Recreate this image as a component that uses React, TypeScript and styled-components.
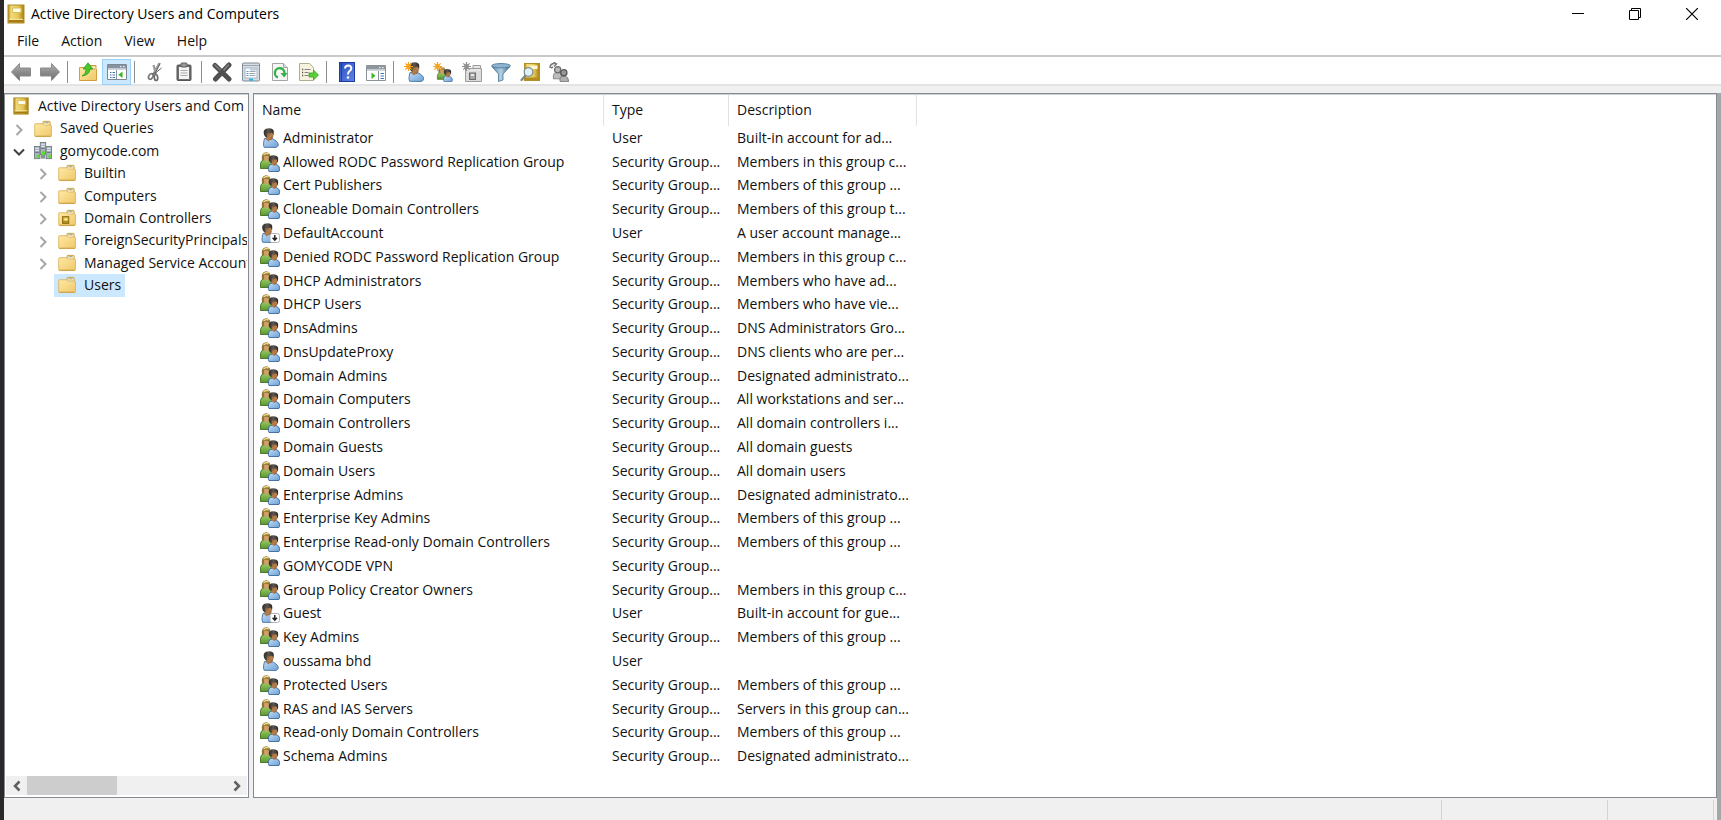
import React from 'react';
import styled, { createGlobalStyle } from 'styled-components';

const GlobalStyle = createGlobalStyle`
  *, *::before, *::after { box-sizing: border-box; }
  body {
    margin: 0;
    background: #fff;
    color: #111;
    font-family: "Open Sans", "Noto Sans", sans-serif;
    font-size: 14px;
    line-height: 20px;
  }
  button {
    font: inherit;
    color: inherit;
    background: none;
    border: 0;
    padding: 0;
    margin: 0;
  }
`;

/* ---------- Icons ---------- */

type IconProps = { size?: number };

const Svg = ({ size = 20, children }: React.PropsWithChildren<IconProps>) => (
  <svg width={size} height={size} viewBox="0 0 20 20" fill="none" aria-hidden="true">
    {children}
  </svg>
);

const GradientDefs = styled.svg`
  display: block;
`;

const Gradients = () => (
  <GradientDefs width="0" height="0" aria-hidden="true">
    <defs>
      <linearGradient id="gold" x1="0" y1="0" x2="1" y2="0">
        <stop offset="0" stopColor="#b58a12" />
        <stop offset=".2" stopColor="#f0dc7c" />
        <stop offset=".65" stopColor="#e3c552" />
        <stop offset="1" stopColor="#a87c12" />
      </linearGradient>
      <linearGradient id="folder" x1="0" y1="0" x2="1" y2="1">
        <stop offset="0" stopColor="#ffe9a6" />
        <stop offset="1" stopColor="#efc868" />
      </linearGradient>
      <linearGradient id="blueBody" x1="0" y1="0" x2="1" y2="1">
        <stop offset="0" stopColor="#c2dcf6" />
        <stop offset="1" stopColor="#6ba0d6" />
      </linearGradient>
      <linearGradient id="greenBody" x1="0" y1="0" x2="0" y2="1">
        <stop offset="0" stopColor="#9acb66" />
        <stop offset="1" stopColor="#5a9630" />
      </linearGradient>
      <linearGradient id="grayArrow" x1="0" y1="0" x2="0" y2="1">
        <stop offset="0" stopColor="#b4b4b4" />
        <stop offset=".5" stopColor="#8c8c8c" />
        <stop offset="1" stopColor="#6e6e6e" />
      </linearGradient>
      <linearGradient id="skin" x1="0" y1="0" x2="1" y2="1">
        <stop offset="0" stopColor="#7d5029" />
        <stop offset=".6" stopColor="#b5814f" />
        <stop offset="1" stopColor="#80512c" />
      </linearGradient>
      <linearGradient id="hair" x1="0" y1="0" x2="1" y2="0">
        <stop offset="0" stopColor="#302c29" />
        <stop offset=".5" stopColor="#5b5651" />
        <stop offset="1" stopColor="#2b2724" />
      </linearGradient>
      <linearGradient id="help" x1="0" y1="0" x2="1" y2="1">
        <stop offset="0" stopColor="#2a4fc0" />
        <stop offset="1" stopColor="#5f86e6" />
      </linearGradient>
      <linearGradient id="funnel" x1="0" y1="0" x2="1" y2="0">
        <stop offset="0" stopColor="#5b87ab" />
        <stop offset=".5" stopColor="#b4d2e6" />
        <stop offset="1" stopColor="#3d678c" />
      </linearGradient>
    </defs>
  </GradientDefs>
);

const BookIcon = ({ size }: IconProps) => (
  <Svg size={size}>
    <rect x="2" y="1" width="16" height="18" fill="url(#gold)" stroke="#b08b28" />
    <path d="M3 16h14v2.500H3z" fill="#a67c12" />
    <path d="M3 15.300h14" stroke="#f8ecae" />
    <rect x="6.500" y="4" width="8.500" height="4.500" fill="#fffce8" stroke="#d9bd55" />
  </Svg>
);

const FolderShape = () => (
  <>
    <path d="M10 4.500V2.500q0-1 1-1h6q1 0 1 1v3" fill="#f8e2a0" stroke="#c79a3c" />
    <path d="M12 3h4" stroke="#6fa9d8" />
    <path d="M.8 5q0-.8 .8-.8H10l1.500 1.500h7q.9 0 .9.800V17.500q0 .9-.9.900H1.700q-.9 0-.9-.9z" fill="url(#folder)" stroke="#dcb45c" />
    <path d="M1.500 18h17" stroke="#c8993a" />
  </>
);

const FolderIcon = ({ size }: IconProps) => (
  <Svg size={size}><FolderShape /></Svg>
);

const OuFolderIcon = ({ size }: IconProps) => (
  <Svg size={size}>
    <FolderShape />
    <rect x="5" y="8.500" width="7" height="7.500" fill="#d2ac2e" stroke="#86690c" />
    <path d="M7 10.500h3.500v2H7z" fill="#fff6c2" />
    <path d="M5 14.500h7" stroke="#86690c" />
  </Svg>
);

const Tower = ({ x, y }: { x: number; y: number }) => (
  <g>
    <rect x={x} y={y} width="6" height="13.500" fill="#a9b4bd" stroke="#727d86" />
    <path d={`M${x + 1} ${y + 2}h4M${x + 1} ${y + 4.5}h4`} stroke="#edf2f5" />
    <path d={`M${x + 1} ${y + 6.5}h4`} stroke="#5d6870" />
    <rect x={x + 2.5} y={y + 9.5} width="3" height="3" fill="#5bdc28" />
  </g>
);

const DomainIcon = ({ size }: IconProps) => (
  <Svg size={size}>
    <Tower x={7} y={0.5} />
    <Tower x={0.5} y={5} />
    <Tower x={13.5} y={5} />
    <rect x="7.500" y="14" width="5" height="4.500" fill="#87939c" />
    <rect x="9" y="11.500" width="3" height="3" fill="#5bdc28" />
  </Svg>
);

const Person = () => (
  <>
    <path d="M4.200 19.300Q3.200 17.500 3.600 14.500L4.500 10.500 10.500 10q3 1 5.500 3 2.500 2 2.400 4.500L16 19.500z" fill="url(#blueBody)" stroke="#41719f" strokeWidth=".9" />
    <path d="M5.500 11l3 2.500 2.500-3.500z" fill="#a9754a" />
    <path d="M5.500 4h7.300l.4 4.500q-.6 3.500-3.400 3.700-3.300-.2-4.300-4z" fill="url(#skin)" />
    <path d="M3.800 5.500Q3 .8 7.800.4q6-.5 6 3.600l-.3 4q-.8-3-1.600-3.400Q9 5.600 6.800 5l.2 4.500Q4.300 9 3.800 5.500z" fill="url(#hair)" />
  </>
);

const GroupPeople = () => (
  <>
    <path d="M.5 16.500V11.500Q1 8.500 3.500 7.800h5q3 1 3 4v4.700z" fill="url(#greenBody)" stroke="#41701f" strokeWidth=".9" />
    <path d="M3.500 3h5.800l.3 4q-.8 2.500-3 2.500T3 6.500z" fill="#cfa06a" />
    <path d="M2 8Q.8 .8 6 .3q5.200-.1 4.300 7L9 8.500 8.800 4.500Q5.500 2.800 4 4.500L4.200 8.300z" fill="#8f7637" />
    <path d="M3.500 3q2-2 5.200-1.200" stroke="#f0da88" strokeWidth="1.400" />
    <path d="M9 19.500Q8 18 8.500 15q.6-2 2.500-2.800h4.500q3.800 1.300 4.200 4 .2 2.200-.8 3.300z" fill="url(#blueBody)" stroke="#3b6695" strokeWidth=".9" />
    <path d="M10 6.500h6.800l.3 4q-.8 3.200-3.300 3.200-2.700-.6-3.500-3.700z" fill="url(#skin)" />
    <path d="M8.800 8Q8.300 3.300 13 3.200q5.300 0 5.200 3.700 0 2.600-.9 4-.2-2.700-1-3.700-2.400.6-4.600.2l.2 3.600Q9 10.500 8.800 8z" fill="url(#hair)" />
  </>
);

const UserIcon = ({ size }: IconProps) => <Svg size={size}><Person /></Svg>;

const DisabledUserIcon = ({ size }: IconProps) => (
  <Svg size={size}>
    <g transform="translate(-1.500 0)"><Person /></g>
    <rect x="10" y="10.500" width="9.500" height="9" rx="2" fill="#fff" stroke="#b3b3b3" />
    <path d="M14.800 12v5M12.600 14.800l2.200 2.400 2.200-2.400" stroke="#222" strokeWidth="1.500" />
  </Svg>
);

const GroupIcon = ({ size }: IconProps) => <Svg size={size}><GroupPeople /></Svg>;

const Spark = ({ color = '#f5a21c' }: { color?: string }) => (
  <>
    <path d="M4.500 0v9M0 4.500h9M1.300 1.300l6.400 6.400M7.700 1.300L1.300 7.700" stroke={color} strokeWidth="1.200" />
    <circle cx="4.500" cy="4.500" r="2.400" fill={color} />
  </>
);

const NewUserIcon = () => (
  <Svg><g transform="translate(1.500 0)"><Person /></g><Spark /></Svg>
);

const NewGroupIcon = () => (
  <Svg><g transform="translate(4 4.500) scale(.78)"><GroupPeople /></g><Spark /></Svg>
);

const NewOuIcon = () => (
  <Svg>
    <path d="M3.500 6.500h16v13h-16z" fill="#dcdcdc" stroke="#9b9b9b" />
    <path d="M11 6V3.500h7.500V6" fill="#e8e8e8" stroke="#9b9b9b" />
    <path d="M5 8h13" stroke="#f3f3f3" />
    <rect x="7.500" y="11" width="6" height="6.500" fill="#a6a6a6" stroke="#6c6c6c" />
    <path d="M9 13h3" stroke="#fff" strokeWidth="1.500" />
    <Spark color="#8e8e8e" />
  </Svg>
);

const ArrowIcon = ({ flip }: { flip?: boolean }) => (
  <Svg>
    <path
      transform={flip ? 'translate(20 0) scale(-1 1)' : undefined}
      d="M.5 10L8.500 1.500V6h11v8h-11v4.500z"
      fill="url(#grayArrow)"
      stroke="#8a8a8a"
      strokeLinejoin="round"
    />
  </Svg>
);

const UpFolderIcon = () => (
  <Svg>
    <path d="M11 5V3.500h7V6" fill="#f8e2a0" stroke="#c79a3c" />
    <path d="M1.500 5.500H10l1.500 1.500h7v11.500h-17z" fill="url(#folder)" stroke="#cf9f3c" />
    <path d="M4 14q4-1.500 4.200-7H5.200L10 .8 14.800 7H12q-.5 6-8 7z" fill="#46c92c" stroke="#249015" strokeWidth=".7" />
  </Svg>
);

const TreePaneIcon = () => (
  <Svg>
    <path d="M.5 2.500h19v15H.5z" fill="#fff" stroke="#7d8894" />
    <path d="M1 3h18v3.500H1z" fill="#8793a0" />
    <path d="M13 4.700h1.500M16 4.700h1.500" stroke="#fff" />
    <path d="M1 7.500h18" stroke="#cfd5da" />
    <path d="M9.500 8v9.500" stroke="#8793a0" />
    <path d="M3 10.500h1.500M5.500 10.500H8M3 13h1.500M5.500 13H8M3 15.500h1.500M5.500 15.500H8" stroke="#3e77b8" />
    <path d="M15.500 9.500v6.500l-4.200-3.200z" fill="#35b71f" />
  </Svg>
);

const ActionPaneIcon = () => (
  <Svg>
    <path d="M.5 3.500h19v15H.5z" fill="#fff" stroke="#8b9297" />
    <path d="M1 4h18v3.500H1z" fill="#8f979d" />
    <path d="M13 5.700h1.500M16 5.700h1.500" stroke="#fff" />
    <path d="M1 8.500h18" stroke="#cfd5da" />
    <path d="M12.500 9v9.500" stroke="#8b9297" />
    <path d="M14.500 11.500H18M14.500 14H18M14.500 16.500H18" stroke="#3e77b8" />
    <path d="M5.500 10.500V17l4-3.200z" fill="#35b71f" />
  </Svg>
);

const CutIcon = () => (
  <Svg>
    <path d="M14.500 1L9 11M8.500 3l2.300 9" stroke="#9a9a9a" strokeWidth="2.200" />
    <path d="M15.200 1.500L10 11.500M16.500 6l-6 5" stroke="#5f5f5f" />
    <ellipse cx="5.800" cy="14.500" rx="2" ry="3" transform="rotate(30 5.800 14.500)" stroke="#7c7c7c" strokeWidth="1.700" />
    <ellipse cx="11" cy="15.500" rx="1.700" ry="3" transform="rotate(-5 11 15.500)" stroke="#6b6b6b" strokeWidth="1.700" />
    <path d="M7 12l4-1.500" stroke="#6b6b6b" strokeWidth="1.500" />
  </Svg>
);

const ClipboardIcon = () => (
  <Svg>
    <rect x="3" y="3" width="14" height="15.500" rx="1" fill="#6e6e6e" stroke="#555" />
    <rect x="5" y="5" width="10" height="12" fill="#f4f4f4" />
    <rect x="7" y="1" width="6" height="4" rx="1" fill="#999" stroke="#5c5c5c" />
    <path d="M6.500 8.500h7M6.500 11h7M6.500 13.500h7" stroke="#aaa" />
  </Svg>
);

const DeleteIcon = () => (
  <Svg>
    <path d="M3 3.500l14 13.500M17 3L3.500 17" stroke="#505050" strokeWidth="5" strokeLinecap="round" />
    <path d="M3 3l5 5M16.500 3l-4.500 5" stroke="#858585" strokeWidth="1.400" strokeLinecap="round" />
  </Svg>
);

const PropertiesIcon = () => (
  <Svg>
    <rect x="1.500" y="1" width="17" height="18" rx="1" fill="#d5dce2" stroke="#7f8b96" />
    <path d="M2 3.500h16" stroke="#9ba7b2" />
    <rect x="4" y="6" width="12" height="10" fill="#fff" stroke="#a8b5bf" />
    <path d="M9 6.500h7v2H9z" fill="#bacbda" />
    <path d="M5.500 9.500h2M5.500 11.500h2M5.500 13.500h2" stroke="#4aa0d8" />
    <path d="M8.500 9.500h6M8.500 11.500h6M8.500 13.500h6" stroke="#9aa7b1" />
    <path d="M8 17.700h4" stroke="#22b4e8" strokeWidth="2" />
  </Svg>
);

const RefreshIcon = () => (
  <Svg>
    <path d="M2.500 1.500h11l4 4v13h-15z" fill="#f6f6f4" stroke="#a4a4a4" />
    <path d="M13.500 1.500v4h4" fill="#ddd" stroke="#a4a4a4" />
    <path d="M8 15.500A4.800 4.800 0 1 1 14.500 11" stroke="#34b14a" strokeWidth="2.300" />
    <path d="M10.500 11h7l-3.300 4.500z" fill="#34b14a" />
  </Svg>
);

const ExportIcon = () => (
  <Svg>
    <path d="M.5 1.500h10l4 4v13H.5z" fill="#f7f2dc" stroke="#b2aa91" />
    <path d="M3 7.500h1.200M3 10.500h1.200M3 13.500h1.200" stroke="#555" strokeWidth="1.300" />
    <path d="M5.500 7.500h6M5.500 10.500h4M5.500 13.500h4" stroke="#85808f" />
    <path d="M10 11h4.500V8l5 5-5 5v-3H10z" fill="#58cf3c" stroke="#3aa324" strokeWidth=".8" />
  </Svg>
);

const HelpIcon = () => (
  <Svg>
    <rect x="2.500" y=".5" width="15" height="19" fill="url(#help)" stroke="#1d3b9c" />
    <path d="M4.500 1v18" stroke="#1e3da5" />
    <path d="M8 6.500q.2-3 3.200-3 3.300.2 3.100 3-.2 1.700-2 2.800Q11 10.300 11 12.500" stroke="#fff" strokeWidth="2" />
    <circle cx="11" cy="15.500" r="1.300" fill="#fff" />
  </Svg>
);

const FilterIcon = () => (
  <Svg>
    <path d="M.8 4.500L7.500 12v7.500l4.500-1.500V12l7-7.500z" fill="url(#funnel)" stroke="#4b7596" strokeWidth=".8" />
    <ellipse cx="10" cy="3.700" rx="9.300" ry="2.200" fill="#8fb4cf" stroke="#4f7a9c" strokeWidth=".9" />
  </Svg>
);

const FindIcon = () => (
  <Svg>
    <rect x="4.500" y="1.500" width="15" height="17" fill="url(#gold)" stroke="#b18e2a" />
    <path d="M5 15.500h14v2.500H5z" fill="#b48c1c" />
    <rect x="9.500" y="3.500" width="8" height="3.500" fill="#fff8cf" />
    <path d="M5.500 13.500L1.500 18" stroke="#7b8790" strokeWidth="2.200" strokeLinecap="round" />
    <circle cx="8.500" cy="10" r="4.300" fill="#e2f1f8" stroke="#7b919f" strokeWidth="1.300" />
  </Svg>
);

const DelegateIcon = () => (
  <Svg>
    <path d="M1 6Q1 1.500 5.500 1.500M4.500.2L7.500 2 5 4.500M2 6l2-1" stroke="#777" strokeWidth="1.500" />
    <g transform="translate(4 4) scale(.8)">
      <path d="M.5 16v-4q0-3 3-4h4q3.500 1 3.500 4v4z" fill="#bdbdbd" stroke="#777" />
      <circle cx="5.800" cy="4.800" r="3.900" fill="#b8b8b8" stroke="#6a6a6a" strokeWidth="1.600" />
      <path d="M9 19.500q-1.500-6 3-7h3.500q4 1.500 4 7z" fill="#b2b2b2" stroke="#6b6b6b" />
      <circle cx="13.500" cy="8.500" r="3.900" fill="#979797" stroke="#555" strokeWidth="1.600" />
    </g>
  </Svg>
);

const Chevron = ({ open }: { open?: boolean }) => (
  <svg width="12" height="12" viewBox="0 0 12 12" fill="none" aria-hidden="true">
    {open
      ? <path d="M1 3.500l5 5 5-5" stroke="#404040" strokeWidth="2" />
      : <path d="M3.500 1L8.500 6l-5 5" stroke="#a6a6a6" strokeWidth="2" />}
  </svg>
);

const ScrollArrow = ({ right }: { right?: boolean }) => (
  <svg width="12" height="12" viewBox="0 0 12 12" fill="none" aria-hidden="true">
    <path d={right ? 'M3.500 1.500L8 6l-4.500 4.500' : 'M8.500 1.500L4 6l4.500 4.500'} stroke="#606060" strokeWidth="2.500" />
  </svg>
);

/* ---------- Window frame ---------- */

const Screen = styled.div`
  display: flex;
  min-height: 100vh;
`;

const DesktopEdge = styled.div`
  flex: none;
  width: 4px;
  background: #2a2828;
`;

const Window = styled.main`
  flex: 1;
  min-width: 0;
  display: flex;
  flex-direction: column;
`;

const TitleBar = styled.header`
  display: flex;
  align-items: center;
  height: 27px;
  padding: 0 1px 0 2px;
`;

const Title = styled.h1`
  flex: 1;
  margin: 0 0 0 5px;
  color: #000;
  font-size: 14px;
  font-weight: 400;
`;

const CaptionButton = styled.button`
  display: grid;
  place-items: center;
  width: 57px;
  height: 26px;
`;

const MenuBar = styled.nav`
  display: flex;
  align-items: center;
  height: 28px;
  padding-left: 2px;
`;

const MenuItem = styled.button`
  padding: 0 11px;
`;

const ToolBar = styled.div`
  display: flex;
  align-items: center;
  height: 31px;
  padding: 2px 0 0 2px;
  border-top: 2px solid #c9c9cc;
  border-bottom: 2px solid #e4e4e4;
`;

const ToolButton = styled.button<{ $active?: boolean }>`
  display: grid;
  place-items: center;
  width: 29px;
  height: 26px;
  border: 1px solid ${p => (p.$active ? '#99d1ff' : 'transparent')};
  background: ${p => (p.$active ? '#cce8ff' : 'transparent')};
`;

const Separator = styled.span`
  width: 1px;
  height: 22px;
  margin: 0 5px 0 3px;
  background: #8c8c8c;
`;

const Workspace = styled.div`
  flex: 1;
  display: flex;
  flex-direction: column;
  padding-top: 7px;
  background: #f0f0f0;
`;

const WorkRow = styled.div`
  flex: 1;
  display: flex;
`;

const WorkColumn = styled.div`
  flex: 1;
  min-width: 0;
  display: flex;
  flex-direction: column;
`;

const ShadowEdge = styled.div`
  flex: none;
  width: 4px;
  background: #a6a6a6;
`;

const Panes = styled.div`
  flex: 1;
  display: grid;
  grid-template-columns: 245px minmax(0, 1fr);
  gap: 4px;
`;

const Pane = styled.section`
  display: flex;
  flex-direction: column;
  min-width: 0;
  overflow: hidden;
  background: #fff;
  border: 1px solid #868b93;
  box-shadow: inset 0 1px #cdd1d5;
`;

const StatusBar = styled.footer`
  display: flex;
  justify-content: flex-end;
  height: 22px;
  padding: 2px 3px 0 0;
`;

const StatusCell = styled.div<{ $width: number }>`
  width: ${p => p.$width}px;
  border-left: 1px solid #d4d4d4;
`;

const StatusEnd = styled.div`
  border-left: 1px solid #d4d4d4;
`;

/* ---------- Console tree ---------- */

const Tree = styled.ul`
  flex: 1;
  margin: 0;
  padding: 1px 1px 0 0;
  list-style: none;
  line-height: 1.6;
`;

const TreeRow = styled.li<{ $depth: number }>`
  display: flex;
  align-items: stretch;
  overflow: hidden;
  padding-left: ${p => (p.$depth === 2 ? 27 : 3)}px;
  white-space: nowrap;
`;

const Expander = styled.button`
  flex: none;
  display: grid;
  place-items: center;
  width: 22px;
  padding: 2px 0 0;
`;

const ExpanderSpace = styled.span`
  flex: none;
  width: 22px;
`;

const TreeLabel = styled.button<{ $selected?: boolean }>`
  display: flex;
  align-items: center;
  gap: 8px;
  padding: 0 4px;
  background: ${p => (p.$selected ? '#cce8ff' : 'transparent')};

  svg { flex: none; }
`;

const ScrollBar = styled.div`
  display: grid;
  grid-template-columns: 21px 1fr 21px;
  height: 19px;
  margin: 0 1px 2px;
  background: #f0f0f0;
`;

const ScrollButton = styled.button`
  display: grid;
  place-items: center;
`;

const ScrollThumb = styled.div`
  width: 45%;
  background: #cdcdcd;
`;

/* ---------- Object list ---------- */

const columns = '350px 125px 188px';

const List = styled.table`
  flex: 1;
  display: flex;
  flex-direction: column;
  padding: 1px 0 29px;
`;

const ListHead = styled.thead`
  display: block;
`;

const HeadRow = styled.tr`
  display: grid;
  grid-template-columns: ${columns};
  height: 31px;
`;

const HeadCell = styled.th`
  padding: 0 8px;
  border-right: 1px solid #e2e2e2;
  font-weight: 400;
  line-height: 30px;
  text-align: left;
`;

const ListBody = styled.tbody`
  flex: 1;
  display: grid;
  grid-auto-rows: minmax(22px, 1fr);
`;

const ListRow = styled.tr`
  display: grid;
  grid-template-columns: ${columns};
  align-items: center;
`;

const Cell = styled.td`
  padding: 0 0 0 8px;
  white-space: nowrap;
`;

const NameCell = styled.td`
  display: flex;
  align-items: center;
  gap: 3px;
  padding: 0 0 0 6px;
  white-space: nowrap;
`;

/* ---------- Data ---------- */

type Kind = 'user' | 'disabled' | 'group';

const objects: [Kind, string, string][] = [
  ['user', 'Administrator', 'Built-in account for ad...'],
  ['group', 'Allowed RODC Password Replication Group', 'Members in this group c...'],
  ['group', 'Cert Publishers', 'Members of this group ...'],
  ['group', 'Cloneable Domain Controllers', 'Members of this group t...'],
  ['disabled', 'DefaultAccount', 'A user account manage...'],
  ['group', 'Denied RODC Password Replication Group', 'Members in this group c...'],
  ['group', 'DHCP Administrators', 'Members who have ad...'],
  ['group', 'DHCP Users', 'Members who have vie...'],
  ['group', 'DnsAdmins', 'DNS Administrators Gro...'],
  ['group', 'DnsUpdateProxy', 'DNS clients who are per...'],
  ['group', 'Domain Admins', 'Designated administrato...'],
  ['group', 'Domain Computers', 'All workstations and ser...'],
  ['group', 'Domain Controllers', 'All domain controllers i...'],
  ['group', 'Domain Guests', 'All domain guests'],
  ['group', 'Domain Users', 'All domain users'],
  ['group', 'Enterprise Admins', 'Designated administrato...'],
  ['group', 'Enterprise Key Admins', 'Members of this group ...'],
  ['group', 'Enterprise Read-only Domain Controllers', 'Members of this group ...'],
  ['group', 'GOMYCODE VPN', ''],
  ['group', 'Group Policy Creator Owners', 'Members in this group c...'],
  ['disabled', 'Guest', 'Built-in account for gue...'],
  ['group', 'Key Admins', 'Members of this group ...'],
  ['user', 'oussama bhd', ''],
  ['group', 'Protected Users', 'Members of this group ...'],
  ['group', 'RAS and IAS Servers', 'Servers in this group can...'],
  ['group', 'Read-only Domain Controllers', 'Members of this group ...'],
  ['group', 'Schema Admins', 'Designated administrato...'],
];

const kindIcons = { user: UserIcon, disabled: DisabledUserIcon, group: GroupIcon };

type Node = {
  label: string;
  depth: number;
  Icon: (p: IconProps) => React.ReactElement;
  expander?: 'open' | 'closed';
  selected?: boolean;
};

const nodes: Node[] = [
  { label: 'Active Directory Users and Com', depth: 0, Icon: BookIcon },
  { label: 'Saved Queries', depth: 1, Icon: FolderIcon, expander: 'closed' },
  { label: 'gomycode.com', depth: 1, Icon: DomainIcon, expander: 'open' },
  { label: 'Builtin', depth: 2, Icon: FolderIcon, expander: 'closed' },
  { label: 'Computers', depth: 2, Icon: FolderIcon, expander: 'closed' },
  { label: 'Domain Controllers', depth: 2, Icon: OuFolderIcon, expander: 'closed' },
  { label: 'ForeignSecurityPrincipals', depth: 2, Icon: FolderIcon, expander: 'closed' },
  { label: 'Managed Service Accounts', depth: 2, Icon: FolderIcon, expander: 'closed' },
  { label: 'Users', depth: 2, Icon: FolderIcon, selected: true },
];

type Tool = { label: string; icon: React.ReactElement; active?: boolean };

const toolGroups: Tool[][] = [
  [
    { label: 'Back', icon: <ArrowIcon /> },
    { label: 'Forward', icon: <ArrowIcon flip /> },
  ],
  [
    { label: 'Up one level', icon: <UpFolderIcon /> },
    { label: 'Show or hide console tree', icon: <TreePaneIcon />, active: true },
  ],
  [
    { label: 'Cut', icon: <CutIcon /> },
    { label: 'Paste', icon: <ClipboardIcon /> },
  ],
  [
    { label: 'Delete', icon: <DeleteIcon /> },
    { label: 'Properties', icon: <PropertiesIcon /> },
    { label: 'Refresh', icon: <RefreshIcon /> },
    { label: 'Export list', icon: <ExportIcon /> },
  ],
  [
    { label: 'Help', icon: <HelpIcon /> },
    { label: 'Show or hide action pane', icon: <ActionPaneIcon /> },
  ],
  [
    { label: 'Create a new user', icon: <NewUserIcon /> },
    { label: 'Create a new group', icon: <NewGroupIcon /> },
    { label: 'Create a new organizational unit', icon: <NewOuIcon /> },
    { label: 'Set filtering options', icon: <FilterIcon /> },
    { label: 'Find objects', icon: <FindIcon /> },
    { label: 'Add to a group', icon: <DelegateIcon /> },
  ],
];

export default function App() {
  return (
    <>
      <GlobalStyle />
      <Screen>
        <DesktopEdge />
        <Window>
          <TitleBar>
            <BookIcon />
            <Title>Active Directory Users and Computers</Title>
            <CaptionButton aria-label="Minimize">
              <svg width="12" height="12"><path d="M0 5.500h12" stroke="#000" /></svg>
            </CaptionButton>
            <CaptionButton aria-label="Restore">
              <svg width="12" height="12" fill="none" stroke="#000">
                <path d="M.5 2.500h9v9h-9zM2.500 2.500v-2h9v9h-2" />
              </svg>
            </CaptionButton>
            <CaptionButton aria-label="Close">
              <svg width="12" height="12"><path d="M0 0l12 12M12 0L0 12" stroke="#000" strokeWidth="1.200" /></svg>
            </CaptionButton>
          </TitleBar>
          <MenuBar>
            {['File', 'Action', 'View', 'Help'].map(m => <MenuItem key={m}>{m}</MenuItem>)}
          </MenuBar>
          <ToolBar>
            {toolGroups.map((group, i) => (
              <React.Fragment key={i}>
                {i > 0 && <Separator />}
                {group.map(t => (
                  <ToolButton key={t.label} aria-label={t.label} $active={t.active}>{t.icon}</ToolButton>
                ))}
              </React.Fragment>
            ))}
          </ToolBar>
          <Workspace>
            <WorkRow>
              <WorkColumn>
                <Panes>
                  <Pane>
                    <Tree>
                      {nodes.map(({ label, depth, Icon, expander, selected }) => (
                        <TreeRow key={label} $depth={depth}>
                          {expander && (
                            <Expander aria-label={`Toggle ${label}`}>
                              <Chevron open={expander === 'open'} />
                            </Expander>
                          )}
                          {!expander && depth > 0 && <ExpanderSpace />}
                          <TreeLabel $selected={selected}>
                            <Icon size={18} />
                            {label}
                          </TreeLabel>
                        </TreeRow>
                      ))}
                    </Tree>
                    <ScrollBar>
                      <ScrollButton aria-label="Scroll left"><ScrollArrow /></ScrollButton>
                      <ScrollThumb />
                      <ScrollButton aria-label="Scroll right"><ScrollArrow right /></ScrollButton>
                    </ScrollBar>
                  </Pane>
                  <Pane>
                    <List>
                      <ListHead>
                        <HeadRow>
                          <HeadCell>Name</HeadCell>
                          <HeadCell>Type</HeadCell>
                          <HeadCell>Description</HeadCell>
                        </HeadRow>
                      </ListHead>
                      <ListBody>
                        {objects.map(([kind, name, description]) => {
                          const Icon = kindIcons[kind];
                          return (
                            <ListRow key={name}>
                              <NameCell><Icon />{name}</NameCell>
                              <Cell>{kind === 'group' ? 'Security Group...' : 'User'}</Cell>
                              <Cell>{description}</Cell>
                            </ListRow>
                          );
                        })}
                      </ListBody>
                    </List>
                  </Pane>
                </Panes>
                <StatusBar>
                  <StatusCell $width={166} />
                  <StatusCell $width={106} />
                  <StatusEnd />
                </StatusBar>
              </WorkColumn>
              <ShadowEdge />
            </WorkRow>
          </Workspace>
        </Window>
      </Screen>
      <Gradients />
    </>
  );
}
